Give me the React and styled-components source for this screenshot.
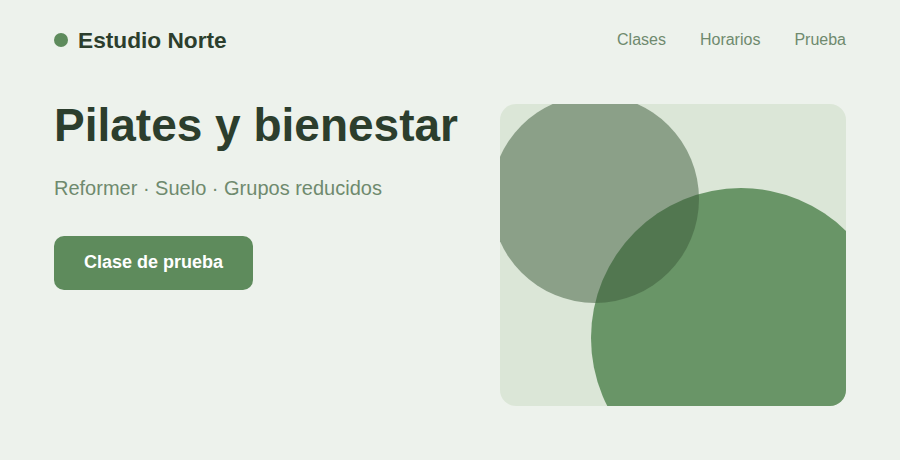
import React from "react";
import styled, { createGlobalStyle } from "styled-components";

const GlobalStyle = createGlobalStyle`
  html, body {
    margin: 0;
    padding: 0;
    background: #edf2ec;
  }
  body {
    font-family: "Liberation Sans", Arial, sans-serif;
    -webkit-font-smoothing: antialiased;
  }
`;

const Page = styled.div`
  width: 900px;
  height: 460px;
  box-sizing: border-box;
  padding: 24px 54px 0;
  background: #edf2ec;
  overflow: hidden;
`;

const Header = styled.header`
  display: flex;
  align-items: center;
  justify-content: space-between;
  height: 32px;
`;

const Brand = styled.div`
  display: flex;
  align-items: center;
  gap: 10px;
  font-size: 22.7px;
  font-weight: 700;
  color: #2c3e2d;
`;

const Dot = styled.span`
  width: 14px;
  height: 14px;
  border-radius: 50%;
  background: #5e8b5c;
`;

const Nav = styled.nav`
  display: flex;
  gap: 34px;
`;

const NavLink = styled.a`
  font-size: 16px;
  color: #6f8a6e;
  text-decoration: none;
`;

const Hero = styled.section`
  display: grid;
  grid-template-columns: minmax(0, 1fr) minmax(0, 1fr);
  gap: 100px;
  margin-top: 44px;
  align-items: start;
`;

const Copy = styled.div`
  display: flex;
  flex-direction: column;
  align-items: flex-start;
`;

const Title = styled.h1`
  margin: 0;
  font-size: 46px;
  line-height: 1.1;
  font-weight: 700;
  color: #2c3e2d;
  white-space: nowrap;
`;

const Subtitle = styled.p`
  margin: 22px 0 0;
  font-size: 20px;
  line-height: 1.5;
  color: #6f8a6e;
`;

const Button = styled.button`
  margin-top: 33px;
  height: 54px;
  padding: 0 30px;
  border: none;
  border-radius: 10px;
  background: #5e8b5c;
  color: #ffffff;
  font-family: inherit;
  font-size: 18px;
  font-weight: 700;
  cursor: pointer;
`;

const Art = styled.div`
  position: relative;
  margin-top: 4px;
  height: 302px;
  border-radius: 16px;
  background: #dbe6d7;
  overflow: hidden;
`;

const Circle = styled.span`
  position: absolute;
  left: ${(p) => p.$left}px;
  top: ${(p) => p.$top}px;
  width: ${(p) => p.$size}px;
  height: ${(p) => p.$size}px;
  border-radius: 50%;
  background: ${(p) => p.$color};
`;

export default function App() {
  return (
    <>
      <GlobalStyle />
      <Page>
        <Header>
          <Brand>
            <Dot />
            Estudio Norte
          </Brand>
          <Nav>
            <NavLink href="#clases">Clases</NavLink>
            <NavLink href="#horarios">Horarios</NavLink>
            <NavLink href="#prueba">Prueba</NavLink>
          </Nav>
        </Header>
        <Hero>
          <Copy>
            <Title>Pilates y bienestar</Title>
            <Subtitle>Reformer · Suelo · Grupos reducidos</Subtitle>
            <Button>Clase de prueba</Button>
          </Copy>
          <Art>
            <Circle $left={91} $top={84} $size={300} $color="#699567" />
            <Circle $left={-9} $top={-9} $size={208} $color="rgba(59, 90, 57, 0.5)" />
          </Art>
        </Hero>
      </Page>
    </>
  );
}
